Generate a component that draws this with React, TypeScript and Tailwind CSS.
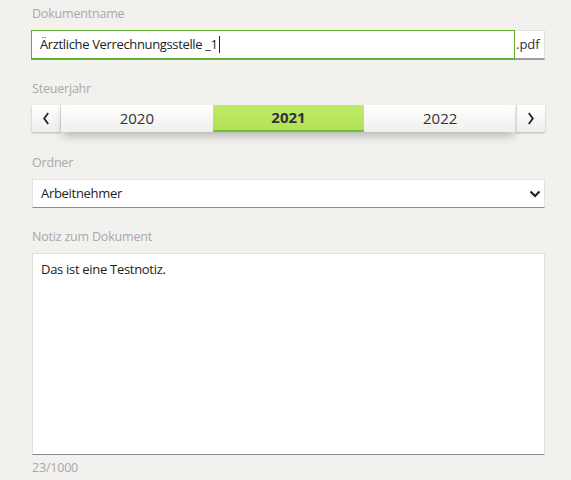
import React from "react";

export default function App() {
  const font = { fontFamily: '"Open Sans", "Noto Sans", sans-serif' };
  return (
    <div className="w-[571px] h-[480px] bg-[#f2f1ee] overflow-hidden" style={font}>
      <div className="ml-[32px] w-[513px] pt-[5px]">
        <div className="text-[12.5px] leading-[18px] text-[#a8a8a8] tracking-[-0.2px]">Dokumentname</div>
        <div className="mt-[7px] flex h-[30px] ml-[-1px]">
          <div className="flex-1 bg-white border border-[#62b02f] border-b-2 flex items-center pl-[8px] text-[13px] tracking-[-0.35px] text-[#222]">
            <span>Ärztliche Verrechnungsstelle _1</span>
            <span className="inline-block w-px h-[17px] bg-[#222] ml-[1px]"></span>
          </div>
          <div className="w-[30px] bg-white border-t border-r border-[#e2e2e2] border-b-2 border-b-[#9a9a9a] flex items-center pl-[1px] text-[13px] text-[#333]">.pdf</div>
        </div>

        <div className="mt-[20px] text-[12.5px] leading-[18px] text-[#a8a8a8] tracking-[-0.2px]">Steuerjahr</div>
        <div className="mt-[7px] flex h-[27px]">
          <button className="w-[29px] bg-gradient-to-b from-white to-[#eeeeec] border-r border-[#d6d6d4] shadow-[0_1px_2px_rgba(0,0,0,0.25)] flex items-center justify-center">
            <svg width="8" height="13" viewBox="0 0 8 13"><path d="M6.2 1 L2.2 6.5 L6.2 12" fill="none" stroke="#222" strokeWidth="1.8" /></svg>
          </button>
          <div className="flex-1 flex shadow-[0_6px_10px_-2px_rgba(0,0,0,0.25)]">
            <div className="flex-1 bg-gradient-to-b from-white to-[#efefed] flex items-center justify-center text-[15px] text-[#333]">2020</div>
            <div className="flex-1 bg-gradient-to-b from-[#c0eb6a] to-[#b2e154] border-b-2 border-[#6cc13a] flex items-center justify-center text-[15px] font-bold text-[#333]">2021</div>
            <div className="flex-1 bg-gradient-to-b from-white to-[#efefed] flex items-center justify-center text-[15px] text-[#333]">2022</div>
          </div>
          <button className="w-[29px] bg-gradient-to-b from-white to-[#eeeeec] border-l border-[#d6d6d4] shadow-[0_1px_2px_rgba(0,0,0,0.25)] flex items-center justify-center">
            <svg width="8" height="13" viewBox="0 0 8 13"><path d="M1.8 1 L5.8 6.5 L1.8 12" fill="none" stroke="#222" strokeWidth="1.8" /></svg>
          </button>
        </div>

        <div className="mt-[22px] text-[12.5px] leading-[18px] text-[#a8a8a8] tracking-[-0.2px]">Ordner</div>
        <div className="mt-[7px] h-[29px] bg-white border border-[#e4e4e2] border-b-[#8a8a8a] flex items-center justify-between pl-[8px] pr-[3px] text-[13px] tracking-[-0.3px] text-[#222]">
          <span>Arbeitnehmer</span>
          <svg width="12" height="8" viewBox="0 0 12 8"><path d="M1.5 1.5 L6 6 L10.5 1.5" fill="none" stroke="#222" strokeWidth="2.2" /></svg>
        </div>

        <div className="mt-[20px] text-[12.5px] leading-[18px] text-[#a8a8a8] tracking-[-0.2px]">Notiz zum Dokument</div>
        <div className="mt-[7px] h-[202px] bg-white border border-[#e0e0de] border-b-[#8a8a8a] pl-[8px] pt-[6px] text-[13px] tracking-[-0.3px] text-[#222]">
          Das ist eine Testnotiz.
        </div>
        <div className="mt-[4px] text-[12.5px] leading-[18px] text-[#a8a8a8] tracking-[-0.2px]">23/1000</div>
      </div>
    </div>
  );
}
